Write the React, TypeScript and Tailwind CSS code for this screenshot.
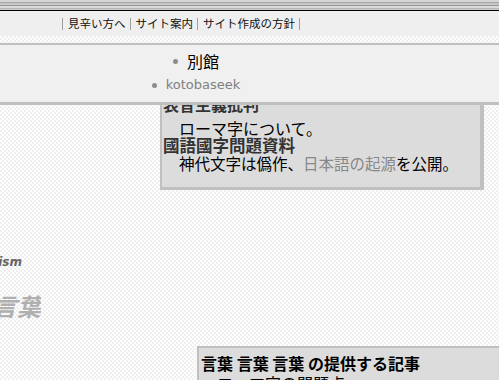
import React from "react";

const jp = "font-['Noto_Sans_CJK_JP','Noto_Sans',sans-serif]";

const navItems = ["見辛い方へ", "サイト案内", "サイト作成の方針"];

const Bar = () => <span className="inline-block w-px h-[12px] bg-[#a0a0a0]" />;

const Dot = () => <span className="inline-block w-[5px] h-[5px] rounded-full bg-[#8c8c8c] mr-[9px]" />;

const Header = () => (
  <header className={`relative z-10 ${jp}`}>
    <div className="h-[10px] bg-[linear-gradient(to_bottom,#d6d6d6_0_2px,#a8a8a8_2px_3px,#c6c6c6_3px_5px,#989898_5px_6px,#dadada_6px_8px,#b6b6b6_8px_9px,#cacaca_9px_10px)]" />
    <div className="h-px bg-black" />
    <nav className="h-[25px] bg-[#efefef] flex items-center pl-[62px] text-[11.5px] text-[#111]">
      <Bar />
      {navItems.map((item) => (
        <React.Fragment key={item}>
          <span className="ml-[5px] mr-[4px] leading-none">{item}</span>
          <Bar />
        </React.Fragment>
      ))}
    </nav>
    <div className="h-[7px]" />
    <div className="h-[62px] bg-[#f0f0f0] border-t-2 border-b-[3px] border-[#c0c0c0] pt-[4px]">
      <ul className="w-[392px] flex flex-col items-center">
        <li className="flex items-center h-[24px] text-[16px] text-black">
          <Dot />
          別館
        </li>
        <li className="flex items-center h-[24px] text-[13px] text-[#808080] font-['DejaVu_Sans',sans-serif]">
          <Dot />
          kotobaseek
        </li>
      </ul>
    </div>
  </header>
);

const App = () => {
  return (
    <div className="w-[499px] h-[380px] overflow-hidden bg-white bg-[repeating-conic-gradient(#efefef_0_25%,#ffffff_0_50%)] bg-[length:4px_4px]">
      <Header />

      <main className={jp}>
        <div className="ml-[160px] mt-[-12px] w-[324px] bg-[#dcdcdc] border-t-2 border-l-2 border-r-4 border-b-[3px] border-[#c0c0c0] pl-[1px] pb-[14px]">
          <div className="text-[16px] leading-[18px] font-bold text-[#333]">表音主義批判</div>
          <div className="mt-[7px] pl-[16px] text-[16px] leading-[17px] text-black">ローマ字について。</div>
          <div className="text-[16.5px] leading-[17px] font-bold text-[#333]">國語國字問題資料</div>
          <div className="pl-[16px] text-[15.5px] leading-[19px] text-black whitespace-nowrap">
            神代文字は僞作、<span className="text-[#888]">日本語の起源</span>を公開。
          </div>
        </div>

        <div className="mt-[65px] w-[22px] h-[15px] overflow-hidden flex justify-end">
          <span className="whitespace-nowrap text-[12px] leading-[15px] italic font-bold text-[#666] font-['DejaVu_Sans',sans-serif]">
            Anti-phoneticism
          </span>
        </div>

        <div className="mt-[22px] w-[41px] h-[28px] overflow-hidden flex justify-end">
          <span className="whitespace-nowrap text-[24px] leading-[28px] italic font-bold text-[#b0b0b0]">
            言葉言葉
          </span>
        </div>

        <div className="ml-[197px] mt-[26px] bg-[#dcdcdc] border-t-2 border-l-2 border-[#c0c0c0] pl-[2px] pt-[5px]">
          <div className="text-[16px] leading-[20px] font-bold text-black whitespace-nowrap">
            言葉 言葉 言葉 の提供する記事
          </div>
          <div className="pl-[16px] text-[16px] leading-[20px] text-black whitespace-nowrap">
            ローマ字の問題点
          </div>
        </div>
      </main>
    </div>
  );
};

export default App;
